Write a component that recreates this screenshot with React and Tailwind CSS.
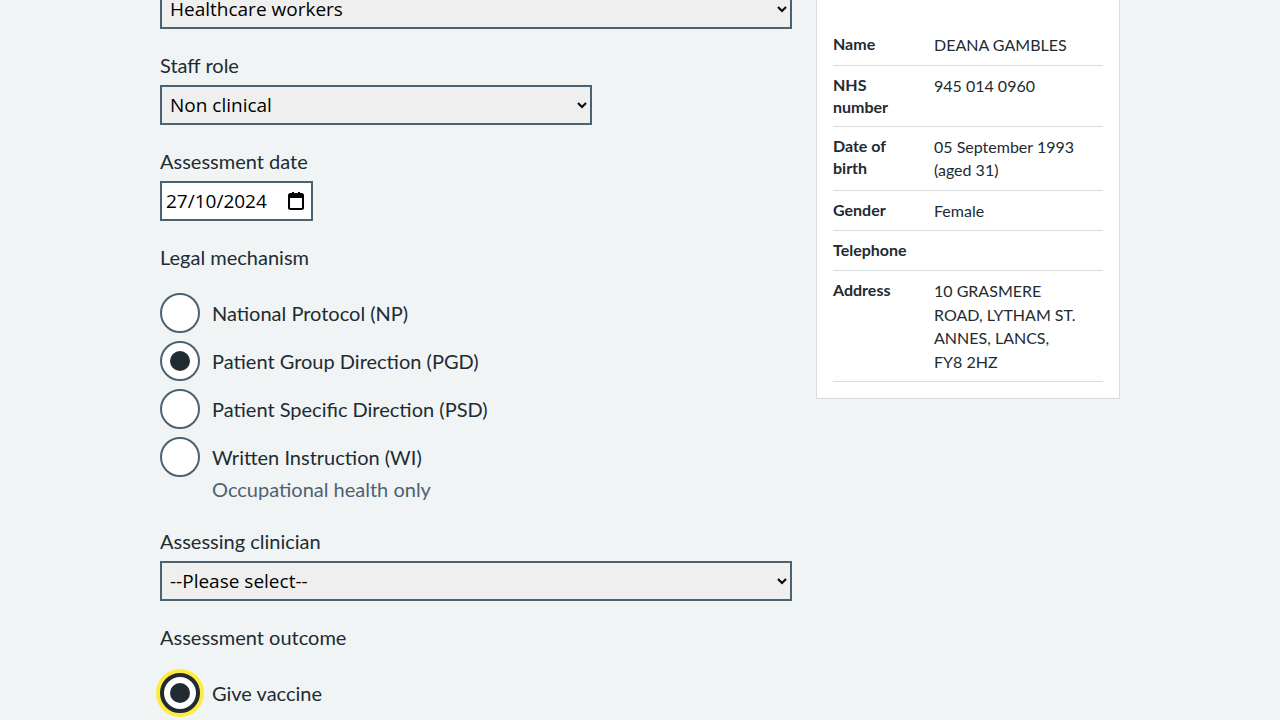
import React from 'react';

const font = { fontFamily: 'Lato, "Liberation Sans", sans-serif' };
const sysFont = { fontFamily: '"Open Sans", "Noto Sans", sans-serif' };

const Radio = ({ label, checked, focused, hint }) => (
  <div className="mb-2">
    <div className="flex items-center min-h-[40px]">
      <span
        className={`w-10 h-10 rounded-full bg-white flex items-center justify-center shrink-0 ${
          focused ? 'border-4 border-[#212b32] shadow-[0_0_0_4px_#ffeb3b]' : 'border-2 border-[#4c6272]'
        }`}
      >
        {checked && <span className="w-5 h-5 rounded-full bg-[#212b32]" />}
      </span>
      <span className="ml-3 text-[20px] leading-[28px] text-[#212b32] -mt-[1px]">{label}</span>
    </div>
    {hint && <div className="ml-[52px] text-[20px] leading-[28px] text-[#4c6272] -mt-[2px] pb-[2px]">{hint}</div>}
  </div>
);

const Select = ({ value, width }) => (
  <select
    defaultValue={value}
    className={`${width} h-10 border-2 border-[#4c6272] bg-[#efefef] text-black text-[19px] pl-1 pr-1`}
    style={sysFont}
  >
    <option>{value}</option>
  </select>
);

const Label = ({ children }) => (
  <div className="text-[20px] leading-[25px] text-[#212b32] mb-[7px]">{children}</div>
);

const rows = [
  ['Name', 'DEANA GAMBLES'],
  [<>NHS<br />number</>, '945 014 0960'],
  [<>Date of<br />birth</>, <>05 September 1993<br />(aged 31)</>],
  ['Gender', 'Female'],
  ['Telephone', ''],
  ['Address', <>10 GRASMERE<br />ROAD, LYTHAM ST.<br />ANNES, LANCS,<br />FY8 2HZ</>],
];

export default function App() {
  return (
    <div className="min-h-screen bg-[#f0f4f5] text-[#212b32] overflow-hidden" style={font}>
      <div className="w-[960px] mx-auto flex gap-6 items-start -mt-[11px]">
        <div className="w-[632px]">
          <div className="mb-6">
            <Select value="Healthcare workers" width="w-[632px]" />
          </div>
          <div className="mb-6">
            <Label>Staff role</Label>
            <Select value="Non clinical" width="w-[432px]" />
          </div>
          <div className="mb-6">
            <Label>Assessment date</Label>
            <div className="w-[153px] h-10 border-2 border-[#4c6272] bg-white flex items-center justify-between pl-1 pr-[6px]">
              <span className="text-[19px] text-black" style={sysFont}>27/10/2024</span>
              <svg width="18" height="20" viewBox="0 0 18 20">
                <rect x="2" y="3" width="14" height="15" rx="1.5" fill="none" stroke="#000" strokeWidth="2" />
                <rect x="2" y="3" width="14" height="4" fill="#000" />
                <rect x="5" y="1" width="2" height="3" fill="#000" />
                <rect x="11" y="1" width="2" height="3" fill="#000" />
              </svg>
            </div>
          </div>
          <div className="mb-6">
            <div className="text-[20px] leading-[25px] mb-[23px]">Legal mechanism</div>
            <Radio label="National Protocol (NP)" />
            <Radio label="Patient Group Direction (PGD)" checked />
            <Radio label="Patient Specific Direction (PSD)" />
            <Radio label="Written Instruction (WI)" hint="Occupational health only" />
          </div>
          <div className="mb-6">
            <Label>Assessing clinician</Label>
            <Select value="--Please select--" width="w-[632px]" />
          </div>
          <div>
            <div className="text-[20px] leading-[25px] mb-[23px]">Assessment outcome</div>
            <Radio label="Give vaccine" checked focused />
          </div>
        </div>
        <div className="w-[304px] bg-white border border-[#d8dde0] px-4 pt-[35px] pb-4">
          {rows.map(([k, v], i) => (
            <div key={i} className="flex border-b border-[#d8dde0] py-2 min-h-[40px]">
              <div className="w-[101px] shrink-0 text-[16px] leading-[22px] font-bold whitespace-nowrap">{k}</div>
              <div className="text-[16px] leading-[23.5px] whitespace-nowrap">{v}</div>
            </div>
          ))}
        </div>
      </div>
    </div>
  );
}
